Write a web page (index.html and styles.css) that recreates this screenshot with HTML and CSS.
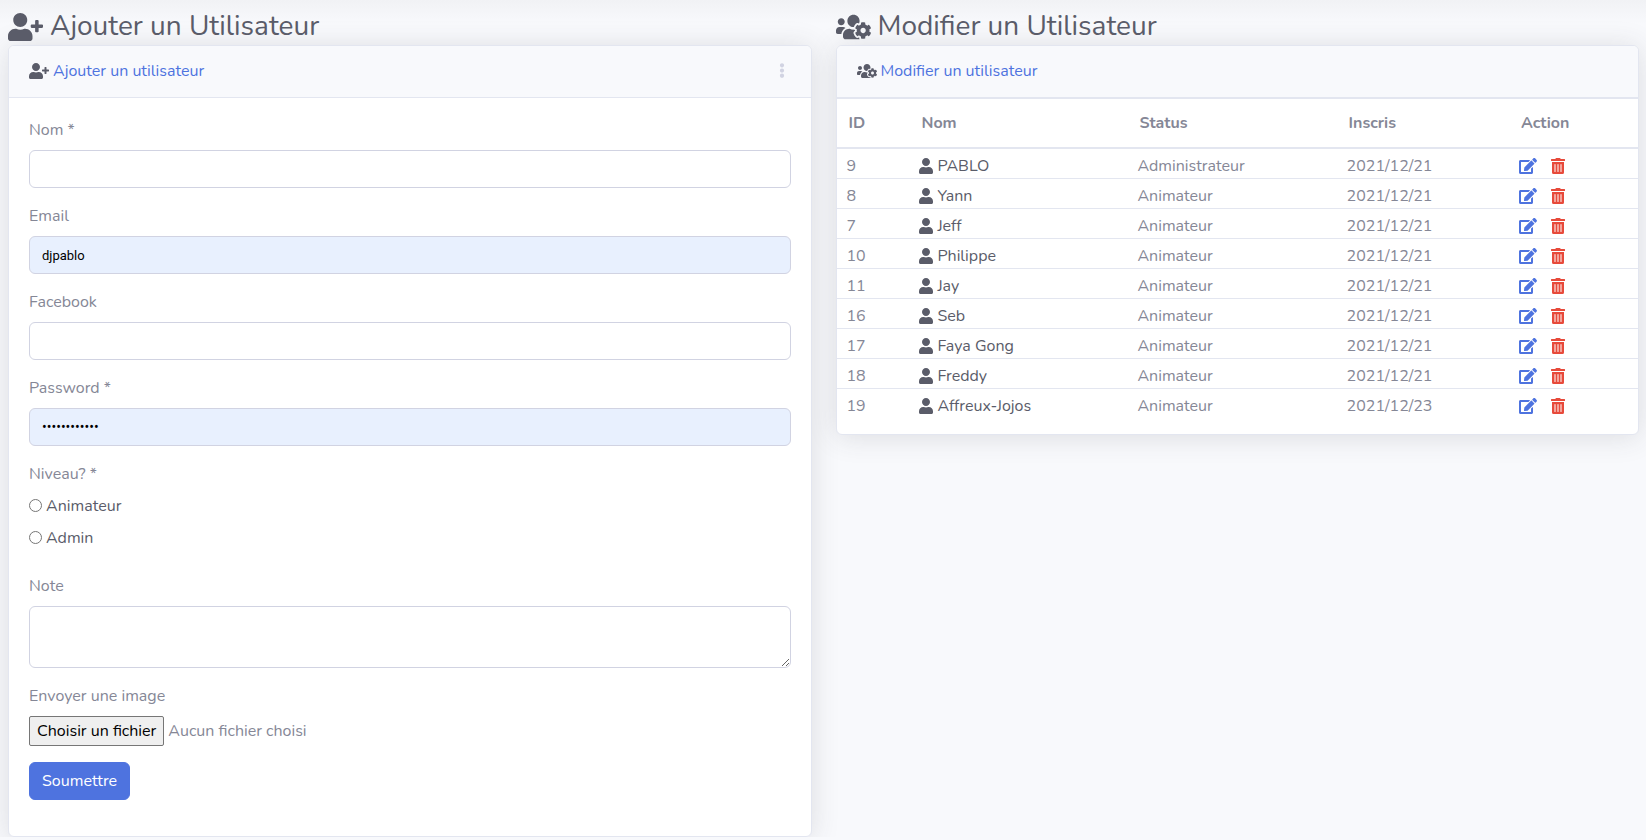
FILE: index.html
```
<!DOCTYPE html>
<html lang="fr">
<head>
  <meta charset="UTF-8" />
  <meta name="viewport" content="width=device-width, initial-scale=1" />
  <title>Utilisateurs</title>
  <link rel="stylesheet" href="styles.css">
</head>
<body>
  <!-- ICONES -->
  <svg class="sprite" aria-hidden="true">
    <symbol id="user" viewBox="0 0 448 512"><path d="M224 256c70.7 0 128-57.3 128-128S294.7 0 224 0 96 57.3 96 128s57.3 128 128 128zm89.6 32h-16.7c-22.2 10.2-46.9 16-72.9 16s-50.6-5.8-72.9-16h-16.7C60.2 288 0 348.2 0 422.4V464c0 26.5 21.5 48 48 48h352c26.5 0 48-21.5 48-48v-41.6c0-74.2-60.2-134.4-134.4-134.4z"/></symbol>
    <symbol id="user-plus" viewBox="0 0 640 512"><path d="M624 208h-64v-64c0-8.8-7.2-16-16-16h-32c-8.8 0-16 7.2-16 16v64h-64c-8.8 0-16 7.2-16 16v32c0 8.8 7.2 16 16 16h64v64c0 8.8 7.2 16 16 16h32c8.8 0 16-7.2 16-16v-64h64c8.8 0 16-7.2 16-16v-32c0-8.8-7.2-16-16-16zm-400 48c70.7 0 128-57.3 128-128S294.7 0 224 0 96 57.3 96 128s57.3 128 128 128zm89.6 32h-16.7c-22.2 10.2-46.9 16-72.9 16s-50.6-5.8-72.9-16h-16.7C60.2 288 0 348.2 0 422.4V464c0 26.5 21.5 48 48 48h352c26.5 0 48-21.5 48-48v-41.6c0-74.2-60.2-134.4-134.4-134.4z"/></symbol>
    <symbol id="users-cog" viewBox="0 0 640 512"><path d="M610.5 341.3c2.6-14.1 2.6-28.5 0-42.6l25.8-14.9c3-1.7 4.3-5.2 3.3-8.5-6.7-21.6-18.2-41.2-33.2-57.4-2.3-2.5-6-3.1-9-1.4l-25.8 14.9c-10.9-9.3-23.4-16.5-36.9-21.3v-29.8c0-3.4-2.4-6.4-5.7-7.1-22.3-5-45-4.8-66.2 0-3.3.7-5.7 3.7-5.7 7.1v29.8c-13.5 4.8-26 12-36.9 21.3l-25.8-14.9c-2.9-1.7-6.7-1.1-9 1.4-15 16.2-26.5 35.8-33.2 57.4-1 3.3.4 6.8 3.3 8.5l25.8 14.9c-2.6 14.1-2.6 28.5 0 42.6l-25.8 14.9c-3 1.7-4.3 5.2-3.3 8.5 6.7 21.6 18.2 41.1 33.2 57.4 2.3 2.5 6 3.1 9 1.4l25.8-14.9c10.9 9.3 23.4 16.5 36.9 21.3v29.8c0 3.4 2.4 6.4 5.7 7.1 22.3 5 45 4.8 66.2 0 3.3-.7 5.7-3.7 5.7-7.1v-29.8c13.5-4.8 26-12 36.9-21.3l25.8 14.9c2.9 1.7 6.7 1.1 9-1.4 15-16.2 26.5-35.8 33.2-57.4 1-3.3-.4-6.8-3.3-8.5l-25.8-14.9zM496 368.5c-26.8 0-48.5-21.8-48.5-48.5s21.8-48.5 48.5-48.5 48.5 21.8 48.5 48.5-21.7 48.5-48.5 48.5zM96 224c35.3 0 64-28.7 64-64s-28.7-64-64-64-64 28.7-64 64 28.7 64 64 64zm224 32c1.9 0 3.7-.5 5.6-.6 8.3-21.7 20.5-42.1 36.3-59.2 7.4-8 17.9-12.6 28.9-12.6 6.9 0 13.7 1.8 19.6 5.3l7.9 4.6c.8-.5 1.6-.9 2.4-1.4 7-14.6 11.2-30.8 11.2-48 0-61.9-50.1-112-112-112S208 82.1 208 144c0 61.9 50.1 112 112 112zm105.2 194.5c-2.3-1.2-4.6-2.6-6.8-3.9-8.2 4.8-15.3 9.8-27.5 9.8-10.9 0-21.4-4.6-28.9-12.6-18.3-19.8-32.3-43.9-40.2-69.6-10.7-34.5 24.9-49.7 25.8-50.3-.1-2.6-.1-5.2 0-7.8l-7.9-4.6c-3.8-2.2-7-5-9.8-8.1-3.3.2-6.5.6-9.8.6-24.6 0-47.6-6-68.5-16h-8.3C179.6 288 128 339.6 128 403.2V432c0 26.5 21.5 48 48 48h255.4c-3.7-6-6.2-12.8-6.2-20.3v-9.2zM173.1 274.6C161.5 263.1 145.6 256 128 256H64c-35.3 0-64 28.7-64 64v32c0 17.7 14.3 32 32 32h65.9c6.3-47.4 34.9-87.3 75.2-109.4z"/></symbol>
    <symbol id="edit" viewBox="0 0 576 512"><path d="M402.6 83.2l90.2 90.2c3.8 3.8 3.8 10 0 13.8L274.4 405.6l-92.8 10.3c-12.4 1.4-22.9-9.1-21.5-21.5l10.3-92.8L388.8 83.2c3.8-3.8 10-3.8 13.8 0zm162-22.9l-48.8-48.8c-15.2-15.2-39.9-15.2-55.2 0l-35.4 35.4c-3.8 3.8-3.8 10 0 13.8l90.2 90.2c3.8 3.8 10 3.8 13.8 0l35.4-35.4c15.2-15.3 15.2-40 0-55.2zM384 346.2V448H64V128h229.8c3.2 0 6.2-1.3 8.5-3.5l40-40c7.6-7.6 2.2-20.5-8.5-20.5H48C21.5 64 0 85.5 0 112v352c0 26.5 21.5 48 48 48h352c26.5 0 48-21.5 48-48V306.2c0-10.7-12.9-16-20.5-8.5l-40 40c-2.2 2.3-3.5 5.3-3.5 8.5z"/></symbol>
    <symbol id="trash" viewBox="0 0 448 512"><path d="M32 464a48 48 0 0 0 48 48h288a48 48 0 0 0 48-48V128H32zm272-256a16 16 0 0 1 32 0v224a16 16 0 0 1-32 0zm-96 0a16 16 0 0 1 32 0v224a16 16 0 0 1-32 0zm-96 0a16 16 0 0 1 32 0v224a16 16 0 0 1-32 0zM432 32H312l-9.4-18.7A24 24 0 0 0 281.1 0H166.8a23.72 23.72 0 0 0-21.4 13.3L136 32H16A16 16 0 0 0 0 48v32a16 16 0 0 0 16 16h416a16 16 0 0 0 16-16V48a16 16 0 0 0-16-16z"/></symbol>
    <symbol id="dots" viewBox="0 0 192 512"><path d="M96 184c39.8 0 72 32.2 72 72s-32.2 72-72 72-72-32.2-72-72 32.2-72 72-72zM24 80c0 39.8 32.2 72 72 72s72-32.2 72-72S135.8 8 96 8 24 40.2 24 80zm0 352c0 39.8 32.2 72 72 72s72-32.2 72-72-32.2-72-72-72-72 32.2-72 72z"/></symbol>
  </svg>

  <main class="row">
    <!-- AJOUTER -->
    <section class="col">
      <h1><svg class="icon icon-titre"><use href="#user-plus"/></svg>Ajouter un Utilisateur</h1>
      <div class="card">
        <div class="card-header">
          <h2><svg class="icon icon-wide"><use href="#user-plus"/></svg>Ajouter un utilisateur</h2>
          <button type="button" class="menu" aria-label="Options"><svg class="icon"><use href="#dots"/></svg></button>
        </div>
        <form class="card-body">
          <div class="form-group">
            <label for="nom">Nom *</label>
            <input class="form-control" type="text" id="nom" name="nom">
          </div>
          <div class="form-group">
            <label for="email">Email</label>
            <input class="form-control rempli" type="text" id="email" name="email" value="djpablo">
          </div>
          <div class="form-group">
            <label for="facebook">Facebook</label>
            <input class="form-control" type="text" id="facebook" name="facebook">
          </div>
          <div class="form-group">
            <label for="password">Password *</label>
            <input class="form-control rempli" type="password" id="password" name="password" value="motdepasse12">
          </div>
          <div class="form-group" role="radiogroup" aria-labelledby="niveau">
            <div class="label" id="niveau">Niveau? *</div>
            <label class="radio"><input type="radio" name="niveau" value="animateur">Animateur</label>
            <label class="radio"><input type="radio" name="niveau" value="admin">Admin</label>
          </div>
          <div class="form-group">
            <label for="note">Note</label>
            <textarea class="form-control" id="note" name="note" rows="2"></textarea>
          </div>
          <div class="form-group">
            <label for="image">Envoyer une image</label>
            <div class="fichier">
              <input type="file" id="image" name="image">
              <label class="fichier-btn" for="image">Choisir un fichier</label>
              <span>Aucun fichier choisi</span>
            </div>
          </div>
          <div class="form-group">
            <button type="submit" class="btn">Soumettre</button>
          </div>
        </form>
      </div>
    </section>

    <!-- MODIFIER -->
    <section class="col">
      <h1><svg class="icon icon-titre"><use href="#users-cog"/></svg>Modifier un Utilisateur</h1>
      <div class="card">
        <div class="card-header">
          <h2><svg class="icon icon-wide"><use href="#users-cog"/></svg>Modifier un utilisateur</h2>
        </div>
        <table>
          <thead>
            <tr>
              <th class="c-id">ID</th>
              <th class="c-nom">Nom</th>
              <th class="c-status">Status</th>
              <th class="c-date">Inscris</th>
              <th>Action</th>
            </tr>
          </thead>
          <tbody id="liste"></tbody>
        </table>
      </div>
    </section>
  </main>

  <script src="script.js"></script>
</body>
</html>
```
FILE: styles.css
```
* {
  margin: 0;
  padding: 0;
  box-sizing: border-box;
}

body {
  background: #f8f9fc linear-gradient(#f1f2f5, #f8f9fc) no-repeat top / 100% 24px;
  color: #858796;
  font-family: Nunito, Lato, "Liberation Sans", sans-serif;
  font-size: 16px;
  line-height: 24px;
}

.sprite {
  display: none;
}

.icon {
  flex: none;
  width: 14px;
  height: 16px;
  fill: currentColor;
}

.icon-wide {
  width: 20px;
  color: #5a5c69;
}

.icon-titre {
  width: 35px;
  height: 28px;
}

.row {
  display: grid;
  grid-template-columns: 1fr 1fr;
  align-items: start;
  gap: 24px;
  padding: 8px 7px 0 8px;
}

h1 {
  display: flex;
  align-items: center;
  gap: 7px;
  color: #5a5c69;
  font-size: 28px;
  font-weight: 400;
  line-height: 37px;
}

.card {
  background-color: #fff;
  border: 1px solid #e3e6f0;
  border-radius: 6px;
  box-shadow: 0 2px 28px 0 rgba(58, 59, 69, 0.15);
}

.card-header {
  display: flex;
  justify-content: space-between;
  align-items: center;
  height: 52px;
  padding: 0 20px 2px;
  background-color: #f8f9fc;
  border-bottom: 1px solid #e3e6f0;
  border-radius: 5px 5px 0 0;
}

h2 {
  display: flex;
  align-items: center;
  gap: 4px;
  color: #4e73df;
  font-size: 16px;
  font-weight: 400;
}

.menu {
  display: flex;
  background: none;
  border: 0;
  color: #d1d3e2;
  cursor: pointer;
}

.menu .icon {
  width: 18px;
  height: 15px;
}

/* FORMULAIRE */
.card-body {
  padding: 20px;
}

.form-group {
  margin-bottom: 16px;
}

.form-group > label,
.label {
  display: block;
  margin-bottom: 8px;
}

.form-control {
  display: block;
  width: 100%;
  height: 38px;
  padding: 6px 12px;
  background-color: #fff;
  border: 1px solid #d1d3e2;
  border-radius: 6px;
  color: #6e707e;
  font: inherit;
}

.rempli {
  background-color: #e8f0fe;
  color: #000;
  font-family: Roboto, sans-serif;
  font-size: 13px;
}

.rempli[type="password"] {
  font-size: 14px;
}

textarea.form-control {
  height: 62px;
  resize: vertical;
}

.form-group > .radio {
  display: flex;
  align-items: center;
  gap: 4px;
  color: #5a5c69;
}

.radio:last-child {
  padding-bottom: 8px;
}

.radio input {
  width: 13px;
  height: 13px;
  margin-bottom: 2px;
}

.fichier {
  display: flex;
  align-items: center;
  gap: 4px;
  position: relative;
}

.fichier input {
  position: absolute;
  inset: 0;
  opacity: 0;
}

.fichier-btn {
  padding: 2px 7px;
  background-color: #efefef;
  border: 1px solid #767676;
  border-radius: 2px;
  color: #000;
}

.btn {
  display: block;
  padding: 6px 12px;
  background-color: #4e73df;
  border: 1px solid #4e73df;
  border-radius: 6px;
  color: #fff;
  font: inherit;
  cursor: pointer;
}

/* TABLEAU */
table {
  width: 100%;
  margin-bottom: 16px;
  border-spacing: 0;
  table-layout: fixed;
}

th {
  padding: 12px;
  border-top: 1px solid #e3e6f0;
  border-bottom: 2px solid #e3e6f0;
  font-weight: 700;
  text-align: left;
}

td {
  padding: 5px 10px 0;
}

tr + tr td {
  border-top: 1px solid #e3e6f0;
}

.c-id {
  width: 9.1%;
}

.c-nom {
  width: 27.2%;
}

.c-status {
  width: 26.1%;
}

.c-date {
  width: 21.5%;
}

.nom,
.actions {
  display: flex;
  align-items: center;
  gap: 4px;
  color: #5a5c69;
}

.actions {
  height: 24px;
  gap: 14px;
}

.actions a {
  display: flex;
  color: #e74a3b;
}

.actions .edit {
  color: #4e73df;
}

.edit .icon {
  width: 18px;
}
```
FILE: script.js
```
const utilisateurs = [
  [9, "PABLO", "Administrateur", "2021/12/21"],
  [8, "Yann", "Animateur", "2021/12/21"],
  [7, "Jeff", "Animateur", "2021/12/21"],
  [10, "Philippe", "Animateur", "2021/12/21"],
  [11, "Jay", "Animateur", "2021/12/21"],
  [16, "Seb", "Animateur", "2021/12/21"],
  [17, "Faya Gong", "Animateur", "2021/12/21"],
  [18, "Freddy", "Animateur", "2021/12/21"],
  [19, "Affreux-Jojos", "Animateur", "2021/12/23"]
];

document.getElementById("liste").innerHTML = utilisateurs.map(([id, nom, status, date]) => `
  <tr>
    <td>${id}</td>
    <td><div class="nom"><svg class="icon"><use href="#user"/></svg>${nom}</div></td>
    <td>${status}</td>
    <td>${date}</td>
    <td><div class="actions">
      <a class="edit" href="#" aria-label="Modifier ${nom}"><svg class="icon"><use href="#edit"/></svg></a>
      <a href="#" aria-label="Supprimer ${nom}"><svg class="icon"><use href="#trash"/></svg></a>
    </div></td>
  </tr>`).join("");
```
